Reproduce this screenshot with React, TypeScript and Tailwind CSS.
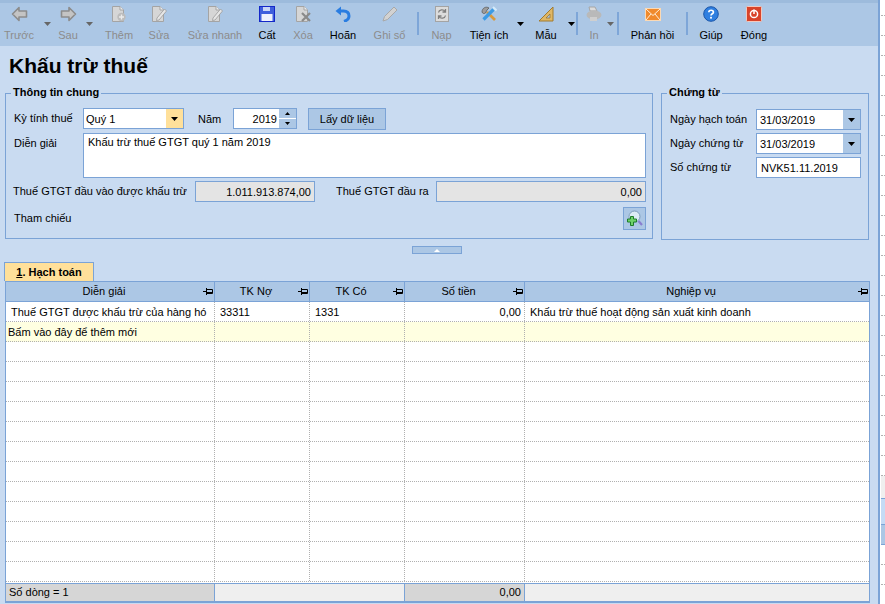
import React from 'react';

const F = 'font-["Liberation_Sans",sans-serif]';

// ---- toolbar icons ----
const ArrowLeft = () => (
  <svg width="17" height="16" viewBox="0 0 17 16">
    <path d="M8 1.5 L1.5 8 L8 14.5 L8 11 L15.5 11 L15.5 5 L8 5 Z" fill="#c4c4c4" stroke="#8c8c8c" strokeWidth="1.6" strokeLinejoin="round" />
  </svg>
);
const ArrowRight = () => (
  <svg width="17" height="16" viewBox="0 0 17 16">
    <path d="M9 1.5 L15.5 8 L9 14.5 L9 11 L1.5 11 L1.5 5 L9 5 Z" fill="#c4c4c4" stroke="#8c8c8c" strokeWidth="1.6" strokeLinejoin="round" />
  </svg>
);
const DocBase = ({ children }: { children?: React.ReactNode }) => (
  <svg width="16" height="16" viewBox="0 0 16 16">
    <path d="M1.5 0.5 H9 L12.5 4 V15.5 H1.5 Z" fill="#d6d6d6" stroke="#a4a4a4" />
    <path d="M9 0.5 V4 H12.5" fill="#f0f0f0" stroke="#a4a4a4" />
    {children}
  </svg>
);
const DocPlus = () => (
  <DocBase>
    <circle cx="10.5" cy="11" r="4.2" fill="#bcbcbc" />
    <path d="M10.5 8.5 V13.5 M8 11 H13" stroke="#ececec" strokeWidth="1.4" />
  </DocBase>
);
const DocEdit = () => (
  <DocBase>
    <path d="M6 12 L13.5 3 L15.5 5 L8 14 L5.5 14.5 Z" fill="#e6e6e6" stroke="#9a9a9a" strokeWidth="0.8" />
  </DocBase>
);
const DocX = () => (
  <DocBase>
    <path d="M7 7 L15 15 M15 7 L7 15" stroke="#8a8a8a" strokeWidth="2.2" />
  </DocBase>
);
const DocSync = () => (
  <svg width="14" height="16" viewBox="0 0 14 16">
    <rect x="0.5" y="0.5" width="13" height="15" fill="#dcdcdc" stroke="#a4a4a4" />
    <path d="M3.5 6.5 C4 3.5 8.5 3 10 5.5 M10.5 3 V6 H7.5 M10.5 9.5 C10 12.5 5.5 13 4 10.5 M3.5 13 V10 H6.5" fill="none" stroke="#7f7f7f" strokeWidth="1.3" />
  </svg>
);
const Floppy = () => (
  <svg width="16" height="16" viewBox="0 0 16 16">
    <rect x="0.5" y="0.5" width="15" height="15" fill="#3f5fdc" stroke="#1428c8" />
    <rect x="4" y="1" width="7" height="4" fill="#c9d6f6" />
    <rect x="2.5" y="8" width="11" height="7" fill="#eef1fc" />
  </svg>
);
const Undo = () => (
  <svg width="16" height="16" viewBox="0 0 16 16">
    <path d="M3 5 H8.5 C12.5 5 14 7.5 14 10 C14 12.5 12 14.5 9 15.5" fill="none" stroke="#2a7de1" strokeWidth="3" />
    <path d="M0.5 5 L6 0.5 L6 9.5 Z" fill="#2a7de1" />
  </svg>
);
const Pencil = () => (
  <svg width="16" height="16" viewBox="0 0 16 16">
    <path d="M1 15 L2.5 10.5 L12 1 L15 4 L5.5 13.5 Z" fill="#d2d2d2" stroke="#a8a8a8" />
  </svg>
);
const Tools = () => (
  <svg width="16" height="16" viewBox="0 0 16 16">
    <path d="M6 6 L14 14" stroke="#d99a3c" strokeWidth="2.6" />
    <path d="M2.5 13.5 L12.5 3.5" stroke="#3b9be6" strokeWidth="3.2" />
    <path d="M1 6 C1 2 5 0 8 2 L6 4 L4.5 7 C3 8 1.5 7.5 1 6 Z" fill="#9c9c9c" stroke="#5c5c5c" strokeWidth="0.8" />
    <path d="M12 1 L15.5 4.5" stroke="#d4ebfb" strokeWidth="2" />
  </svg>
);
const Ruler = () => (
  <svg width="16" height="16" viewBox="0 0 16 16">
    <path d="M15 1 V15 H1 Z" fill="#e0b765" stroke="#a17a2e" />
    <path d="M12 8 V12 H8 Z" fill="#acc7e5" stroke="#8f6d2c" strokeWidth="0.7" />
  </svg>
);
const Printer = () => (
  <svg width="16" height="16" viewBox="0 0 16 16">
    <path d="M3 1 H9 L11 5 H4 Z" fill="#dcdcdc" stroke="#a6a6a6" />
    <ellipse cx="8" cy="9" rx="7.5" ry="4.6" fill="#b9b9b9" />
    <rect x="4" y="11" width="7" height="4" fill="#cfcfcf" />
  </svg>
);
const Envelope = () => (
  <svg width="16" height="13" viewBox="0 0 16 13">
    <rect x="0.5" y="0.5" width="15" height="12" fill="#f08a2c" stroke="#fbd9b4" />
    <path d="M1 1 L8 7.5 L15 1 M1 12 L6 6 M15 12 L10 6" fill="none" stroke="#ffeedb" />
  </svg>
);
const Help = () => (
  <svg width="16" height="16" viewBox="0 0 16 16">
    <circle cx="8" cy="8" r="7.3" fill="#2f7fe0" stroke="#1a55a8" />
    <path d="M5.8 6.2 C5.8 3.6 10.4 3.6 10.4 6.2 C10.4 7.8 8 7.8 8 9.6" fill="none" stroke="#ffffff" strokeWidth="1.7" />
    <rect x="7.1" y="10.8" width="1.8" height="1.8" fill="#ffffff" />
  </svg>
);
const Power = () => (
  <svg width="16" height="16" viewBox="0 0 16 16">
    <rect x="0.5" y="0.5" width="15" height="15" rx="1" fill="#d8432a" stroke="#f3c8bd" />
    <circle cx="8" cy="8" r="3.6" fill="none" stroke="#ffffff" strokeWidth="1.5" />
    <path d="M8 3.5 V8" stroke="#ffffff" strokeWidth="1.5" />
  </svg>
);
const Pin = () => (
  <svg width="10" height="7" viewBox="0 0 10 7" className="shrink-0">
    <path d="M0 3.5 H3 M3.5 0 V7 M3.5 1.5 H9.5 V5.5 H3.5 M3.5 4.5 H9.5" fill="none" stroke="#000000" />
  </svg>
);
const Caret = ({ color = '#000000' }: { color?: string }) => (
  <svg width="7" height="4" viewBox="0 0 7 4">
    <path d="M0 0 H7 L3.5 4 Z" fill={color} />
  </svg>
);

const ToolItem = ({ label, w, off, icon }: { label: string; w: string; off?: boolean; icon: React.ReactNode }) => (
  <div className={`${w} h-[43px] flex flex-col items-center shrink-0`}>
    <div className="h-[18px] mt-[2px] flex items-center justify-center">{icon}</div>
    <div className={`mt-[5px] text-[11px] leading-[14px] whitespace-nowrap ${off ? 'text-[#8c8c8c]' : 'text-black'}`}>{label}</div>
  </div>
);
const ToolCaret = ({ w, off }: { w: string; off?: boolean }) => (
  <div className={`${w} h-[43px] flex justify-center items-start pt-[19px] shrink-0`}>
    <Caret color={off ? '#666666' : '#000000'} />
  </div>
);
const ToolSep = () => <div className="w-[2px] h-[23px] mt-[9px] bg-[#7ea6d8] shrink-0" />;

const Toolbar = () => (
  <div className="h-[46px] bg-[#acc7e5] border-t-[3px] border-[#9dbbdc] flex items-start shrink-0">
    <ToolItem label="Trước" w="w-[38px]" off icon={<ArrowLeft />} />
    <ToolCaret w="w-[18px]" off />
    <ToolItem label="Sau" w="w-[24px]" off icon={<ArrowRight />} />
    <ToolCaret w="w-[18px]" off />
    <ToolItem label="Thêm" w="w-[42px]" off icon={<DocPlus />} />
    <ToolItem label="Sửa" w="w-[38px]" off icon={<DocEdit />} />
    <ToolItem label="Sửa nhanh" w="w-[74px]" off icon={<DocEdit />} />
    <ToolItem label="Cất" w="w-[30px]" icon={<Floppy />} />
    <ToolItem label="Xóa" w="w-[42px]" off icon={<DocX />} />
    <ToolItem label="Hoãn" w="w-[38px]" icon={<Undo />} />
    <ToolItem label="Ghi sổ" w="w-[55px]" off icon={<Pencil />} />
    <ToolSep />
    <ToolItem label="Nạp" w="w-[45px]" off icon={<DocSync />} />
    <ToolItem label="Tiện ích" w="w-[50px]" icon={<Tools />} />
    <ToolCaret w="w-[12px]" />
    <ToolItem label="Mẫu" w="w-[40px]" icon={<Ruler />} />
    <ToolCaret w="w-[10px]" />
    <ToolSep />
    <ToolItem label="In" w="w-[32px]" off icon={<Printer />} />
    <ToolCaret w="w-[8px] -ml-[4px]" off />
    <div className="w-[3px] shrink-0" />
    <ToolSep />
    <ToolItem label="Phản hồi" w="w-[67px]" icon={<Envelope />} />
    <ToolSep />
    <ToolItem label="Giúp" w="w-[46px]" icon={<Help />} />
    <ToolItem label="Đóng" w="w-[40px]" icon={<Power />} />
  </div>
);

// ---- form bits ----
const GroupBox = ({ title, className, children }: { title: string; className: string; children: React.ReactNode }) => (
  <div className={`relative border border-[#7ba3d6] ${className}`}>
    <div className="absolute left-[5px] top-[-9px] px-[2px] bg-[#c9dbf1] font-bold text-[11px] leading-[14px] text-black">{title}</div>
    {children}
  </div>
);
const Field = ({ className, children }: { className: string; children?: React.ReactNode }) => (
  <div className={`border border-[#7ba3d6] text-[11px] leading-[14px] text-black ${className}`}>{children}</div>
);
const DateField = ({ value }: { value: string }) => (
  <Field className="w-[105px] h-[21px] bg-white flex items-center justify-between pl-[3px]">
    <span>{value}</span>
    <span className="w-[17px] h-full bg-[#acc7e5] flex items-center justify-center"><Caret /></span>
  </Field>
);

const columns = [
  { title: 'Diễn giải', w: 'w-[209px]' },
  { title: 'TK Nợ', w: 'w-[95px]' },
  { title: 'TK Có', w: 'w-[95px]' },
  { title: 'Số tiền', w: 'w-[120px]' },
  { title: 'Nghiệp vụ', w: 'flex-1' },
];

const Row = ({ cells, bg, pad = 'pl-[5px]' }: { cells: string[]; bg: string; pad?: string }) => (
  <div className={`flex h-[20px] border-b border-dotted border-[#b0b0b0] ${bg}`}>
    {columns.map((c, i) => (
      <div
        key={c.title}
        className={`${c.w} h-full shrink-0 flex items-center overflow-hidden whitespace-nowrap text-[11px] leading-[14px] text-black ${i < 4 ? 'border-r border-dotted border-[#b0b0b0]' : ''} ${i === 3 ? 'justify-end pr-[3px]' : i === 0 ? pad : 'pl-[5px]'}`}
      >
        {cells[i]}
      </div>
    ))}
  </div>
);

const Grid = () => (
  <div className="flex-1 flex flex-col bg-white border border-[#7ba3d6] border-b-[2px] ml-[5px] w-[865px]">
    <div className="flex h-[20px] bg-[#acc7e5] border-b border-[#7ba3d6]">
      {columns.map((c, i) => (
        <div key={c.title} className={`${c.w} relative shrink-0 flex items-center justify-center pr-[12px] text-[11px] text-black ${i < 4 ? 'border-r border-[#7ba3d6]' : ''}`}>
          {c.title}
          <span className="absolute right-[1px] top-[6px] flex"><Pin /></span>
        </div>
      ))}
    </div>
    <Row bg="bg-white" cells={['Thuế GTGT được khấu trừ của hàng hó', '33311', '1331', '0,00', 'Khấu trừ thuế hoạt động sản xuất kinh doanh']} />
    <Row bg="bg-[#ffffe1]" pad="pl-[2px]" cells={['Bấm vào đây để thêm mới', '', '', '', '']} />
    {Array.from({ length: 12 }).map((_, i) => (
      <Row key={i} bg="bg-white" cells={['', '', '', '', '']} />
    ))}
    <div className="flex-1" />
    <div className="flex h-[18px] border-t border-[#7ba3d6] text-[11px] text-black">
      <div className="w-[209px] bg-[#d6d6d6] border-r border-[#7ba3d6] pl-[3px] flex items-center">Số dòng = 1</div>
      <div className="w-[190px] bg-[#efefef] border-r border-[#7ba3d6]" />
      <div className="w-[120px] bg-[#d6d6d6] border-r border-[#7ba3d6] pr-[3px] flex items-center justify-end">0,00</div>
      <div className="flex-1 bg-[#efefef]" />
    </div>
  </div>
);

const SideStrip = () => (
  <div className="flex-1 flex flex-col bg-white pl-[1px]">
    <div className="h-[16px] border-b border-dotted border-[#b0b0b0] shrink-0" />
    {Array.from({ length: 23 }).map((_, i) => (
      <div key={i} className="h-[20px] border-b border-dotted border-[#b0b0b0] shrink-0" />
    ))}
    <div className="h-[22px] bg-[#efefef] shrink-0" />
    <div className="h-[27px] bg-[#c5dbf5] border-y border-[#7ba3d6] shrink-0" />
    <div className="h-[20px] bg-[#acc7e5] border-b border-[#7ba3d6] shrink-0" />
    <div className="h-[20px] border-b border-dotted border-[#b0b0b0] shrink-0" />
    <div className="h-[20px] border-b border-dotted border-[#b0b0b0] shrink-0" />
  </div>
);

export default function App() {
  return (
    <div className={`w-[885px] h-[604px] flex overflow-hidden ${F}`}>
      <div className="w-[878px] h-full flex flex-col bg-[#c9dbf1] shrink-0">
        <Toolbar />
        <div className="h-[37px] pl-[9px] pt-[6px] font-bold text-[21px] leading-[27px] text-black shrink-0">Khấu trừ thuế</div>
        <div className="flex ml-[5px] mt-[10px] shrink-0">
          <GroupBox title="Thông tin chung" className="w-[648px] h-[146px] pt-[14px] pl-[8px] pr-[3px]">
            <div className="flex items-start h-[21px]">
              <span className="w-[69px] h-[21px] flex items-center text-[11px] text-black">Kỳ tính thuế</span>
              <Field className="w-[101px] h-[21px] bg-white flex items-center justify-between pl-[2px]">
                <span>Quý 1</span>
                <span className="w-[17px] h-full bg-[#ffe09a] flex items-center justify-center"><Caret /></span>
              </Field>
              <span className="ml-[14px] w-[35px] h-[22px] flex items-center text-[11px] text-black">Năm</span>
              <Field className="w-[64px] h-[21px] bg-white flex items-center justify-end">
                <span className="pr-[2px]">2019</span>
                <span className="w-[17px] h-full bg-[#acc7e5] flex flex-col items-center justify-between py-[3px]">
                  <svg width="5" height="3" viewBox="0 0 5 3"><path d="M0 3 H5 L2.5 0 Z" fill="#000000" /></svg>
                  <span className="w-full h-[1px] bg-white" />
                  <svg width="5" height="3" viewBox="0 0 5 3"><path d="M0 0 H5 L2.5 3 Z" fill="#000000" /></svg>
                </span>
              </Field>
              <Field className="ml-[11px] w-[78px] h-[22px] bg-[#acc7e5] flex items-center justify-center">Lấy dữ liệu</Field>
            </div>
            <div className="flex mt-[4px]">
              <span className="w-[69px] pt-[3px] text-[11px] leading-[14px] text-black">Diễn giải</span>
              <Field className="w-[563px] h-[45px] bg-white pl-[4px] pt-[1px]">Khấu trừ thuế GTGT quý 1 năm 2019</Field>
            </div>
            <div className="flex items-center mt-[3px] -ml-[1px]">
              <span className="w-[182px] text-[11px] text-black whitespace-nowrap">Thuế GTGT đầu vào được khấu trừ</span>
              <Field className="w-[120px] h-[21px] bg-[#e4e4e4] flex items-center justify-end pr-[3px]">1.011.913.874,00</Field>
              <span className="ml-[21px] w-[100px] text-[11px] text-black whitespace-nowrap">Thuế GTGT đầu ra</span>
              <Field className="w-[210px] h-[21px] bg-[#e4e4e4] flex items-center justify-end pr-[3px]">0,00</Field>
            </div>
            <div className="flex items-center justify-between mt-[5px]">
              <span className="text-[11px] text-black">Tham chiếu</span>
              <div className="w-[23px] h-[23px] mr-[3px] border border-[#7ba3d6] bg-[#acc7e5] flex items-center justify-center">
                <svg width="17" height="17" viewBox="0 0 17 17">
                  <circle cx="8.5" cy="6.5" r="5.5" fill="#dcecf6" stroke="#7d9dbb" />
                  <path d="M12.5 11 L16 15" stroke="#8a7fd0" strokeWidth="2.2" />
                  <path d="M4.5 6.5 H7.5 V9 H10.5 V12 H7.5 V15.5 H4.5 V12 H1.5 V9 H4.5 Z" fill="#6fd36a" stroke="#1f7d2c" />
                </svg>
              </div>
            </div>
          </GroupBox>
          <GroupBox title="Chứng từ" className="ml-[8px] w-[208px] h-[147px] pt-[15px] pl-[8px]">
            <div className="flex flex-col gap-[3px]">
              <div className="flex items-center">
                <span className="w-[86px] text-[11px] text-black">Ngày hạch toán</span>
                <DateField value="31/03/2019" />
              </div>
              <div className="flex items-center">
                <span className="w-[86px] text-[11px] text-black">Ngày chứng từ</span>
                <DateField value="31/03/2019" />
              </div>
              <div className="flex items-center">
                <span className="w-[86px] text-[11px] text-black">Số chứng từ</span>
                <Field className="w-[105px] h-[21px] bg-white flex items-center pl-[4px]">NVK51.11.2019</Field>
              </div>
            </div>
          </GroupBox>
        </div>
        <div className="mt-[6px] ml-[412px] w-[50px] h-[8px] bg-[#acc7e5] border border-[#7ba3d6] flex items-center justify-center shrink-0">
          <span className="border-x-[3px] border-x-transparent border-b-[3px] border-b-white" />
        </div>
        <div className="ml-[4px] mt-[8px] w-[90px] h-[19px] bg-[#ffe09a] border border-b-0 border-[#7ba3d6] flex items-center justify-center font-bold text-[11px] text-black shrink-0">
          <span><u>1</u>. Hạch toán</span>
        </div>
        <Grid />
        <div className="h-[1px] shrink-0" />
      </div>
      <div className="w-[2px] bg-[#7ba3d6] shrink-0" />
      <SideStrip />
    </div>
  );
}
